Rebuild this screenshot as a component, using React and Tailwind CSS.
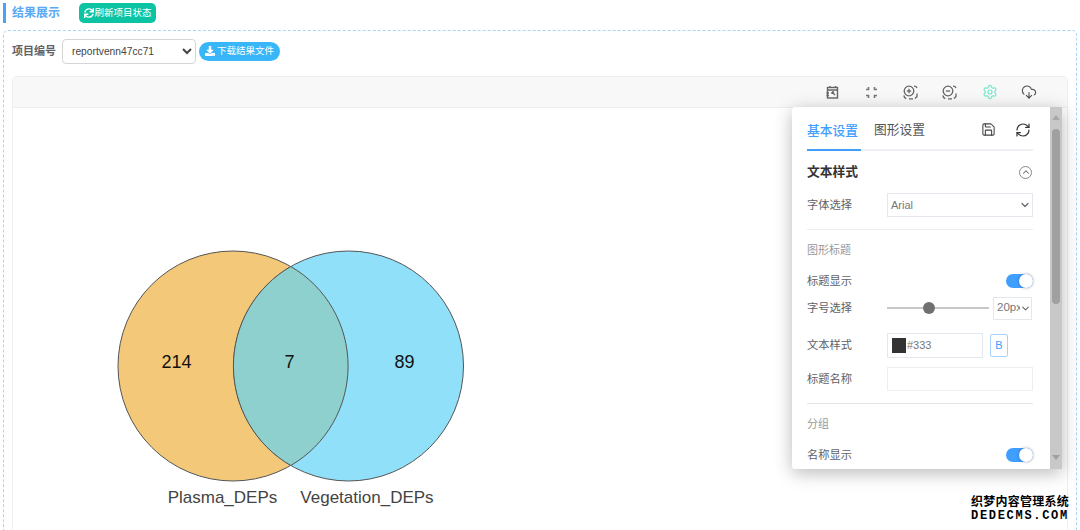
import React from 'react';
import { ChevronDown, ChevronUp, CloudDownload, RefreshCw, Save, Settings } from 'lucide-react';
import { FaDownload, FaSync } from 'react-icons/fa';

const font = { fontFamily: '"Liberation Sans", "Noto Sans CJK SC", sans-serif' };

const RestoreIcon = () => (
  <svg width="13" height="14" viewBox="0 0 13 14" fill="none" stroke="#666" strokeWidth="1.4">
    <rect x="1.5" y="2.5" width="10" height="10.5" />
    <path d="M1.5 5h10M4 1v2M9.5 1v2M0.5 8h2.5M0.5 10.5h2.5" />
    <path d="M6 7l3 3M6 7v2M6 7h2" />
  </svg>
);

const FullIcon = () => (
  <svg width="13" height="13" viewBox="0 0 13 13" fill="none" stroke="#777" strokeWidth="1.6">
    <path d="M1 3.5L3.5 3.5L3.5 1M9.5 1L9.5 3.5L12 3.5M1 9.5L3.5 9.5L3.5 12M9.5 12L9.5 9.5L12 9.5" />
  </svg>
);

const ZoomIcon = ({ plus }) => (
  <svg width="15" height="15" viewBox="0 0 15 15" fill="none" stroke="#666" strokeWidth="1.3">
    <circle cx="6" cy="6" r="4.8" />
    <path d="M3.8 6h4.4" />
    {plus && <path d="M6 3.8v4.4" />}
    <path d="M11 1.2c1.4 0 2.6.6 3 1.8M14 8.5v3l-2 2M10 13.8H6M0.8 10.5c.3 1.5 1 2.6 2.4 3.2" />
  </svg>
);

const Toggle = () => (
  <div className="flex w-[27px] h-[14px] rounded-full bg-[#409eff] items-center justify-end">
    <div className="w-[14px] h-[14px] rounded-full bg-white shadow-[0_0_3px_rgba(0,0,0,0.35)]" />
  </div>
);

const Row = ({ label, className, children }) => (
  <div className={`flex items-center justify-between text-[11.25px] text-[#606266] ${className}`}>
    <span className="w-[80px] shrink-0">{label}</span>
    {children}
  </div>
);

const VennChart = () => (
  <svg width="500" height="420" viewBox="13 108 500 420" className="block">
    <circle cx="233" cy="366" r="115" fill="#f3c879" stroke="#555" strokeWidth="1" />
    <circle cx="348.5" cy="366" r="115" fill="#8fe0f8" stroke="#555" strokeWidth="1" />
    <path
      d="M290.75 266.5A115 115 0 0 1 290.75 465.5A115 115 0 0 1 290.75 266.5Z"
      fill="#8dd0ce"
      stroke="#555"
      strokeWidth="1"
    />
    <g fontFamily="Liberation Sans, sans-serif" fontSize="18" textAnchor="middle" fill="#111">
      <text x="176.5" y="368">214</text>
      <text x="289.5" y="368">7</text>
      <text x="404.5" y="368">89</text>
    </g>
    <g fontFamily="Liberation Sans, sans-serif" fontSize="17" textAnchor="middle" fill="#444">
      <text x="222.5" y="503">Plasma_DEPs</text>
      <text x="367" y="503">Vegetation_DEPs</text>
    </g>
  </svg>
);

const SettingsPopover = () => (
  <div className="absolute left-[779px] top-[30px] w-[270px] h-[362px] flex bg-white rounded-l-[3px] overflow-hidden shadow-[0_4px_18px_rgba(0,0,0,0.28)]">
    <div className="w-[258px] pl-[15px] pr-[17px] shrink-0">
      <div className="flex items-end h-[44px] border-b-2 border-[#eff0f5]">
        <div className="w-[54px] h-[44px] flex items-center text-[12.75px] text-[#409eff] font-medium border-b-2 border-[#409eff] -mb-[2px] pt-[5px]">
          基本设置
        </div>
        <div className="ml-[13px] h-[44px] flex items-center text-[12.75px] text-[#555] pt-[5px]">图形设置</div>
        <div className="ml-auto h-[44px] flex items-center gap-[19px] pr-[2px] pt-[5px]">
          <Save size={15} color="#444" strokeWidth={1.7} />
          <RefreshCw size={16} color="#333" strokeWidth={1.8} />
        </div>
      </div>
      <div className="flex items-center justify-between h-[42px] text-[12.75px] font-bold text-[#333]">
        文本样式
        <div className="w-[13px] h-[13px] rounded-full border border-[#888] flex items-center justify-center mr-px">
          <ChevronUp size={10} color="#666" strokeWidth={2.5} />
        </div>
      </div>
      <Row label="字体选择" className="h-[24px]">
        <div className="flex-1 h-[24px] border border-[#e4e7ed] flex items-center justify-between pl-[3px] pr-[1px] text-[11px] text-[#777]">
          Arial
          <ChevronDown size={12} color="#666" strokeWidth={2.4} />
        </div>
      </Row>
      <div className="h-px bg-[#eeeeee] mt-[12px]" />
      <div className="h-[39px] pt-[2px] flex items-center text-[11px] text-[#999]">图形标题</div>
      <Row label="标题显示" className="h-[24px]">
        <Toggle />
      </Row>
      <Row label="字号选择" className="h-[24px] mt-[3px]">
        <div className="flex-1 flex items-center">
          <div className="w-[36px] h-[2px] bg-[#c8c8c8]" />
          <div className="w-[12px] h-[12px] rounded-full bg-[#707070]" />
          <div className="w-[54px] h-[2px] bg-[#c8c8c8]" />
          <div className="ml-[4px] w-[39px] h-[23px] border border-[#e4e7ed] flex items-center text-[11.5px] text-[#777] pl-[3px]">
            <span className="w-[23px] overflow-hidden shrink-0">20px</span>
            <ChevronDown size={11} color="#666" strokeWidth={2.4} className="shrink-0" />
          </div>
        </div>
      </Row>
      <Row label="文本样式" className="h-[25px] mt-[13px]">
        <div className="flex-1 flex items-center">
          <div className="w-[96px] h-[25px] border border-[#e4e7ed] flex items-center pl-[4px] gap-[1px] text-[11px] text-[#777]">
            <div className="w-[14px] h-[15px] bg-[#333]" />
            #333
          </div>
          <div className="ml-[7px] w-[18px] h-[23px] border border-[#a8d2fb] rounded-[2px] flex items-center justify-center text-[11px] text-[#409eff]">
            B
          </div>
        </div>
      </Row>
      <Row label="标题名称" className="h-[24px] mt-[9px]">
        <div className="flex-1 h-[24px] border border-[#eeeeee]" />
      </Row>
      <div className="h-px bg-[#e4e4e4] mt-[12px]" />
      <div className="h-[39px] pt-[2px] flex items-center text-[11px] text-[#999]">分组</div>
      <Row label="名称显示" className="h-[24px]">
        <Toggle />
      </Row>
    </div>
    <div className="w-[12px] bg-[#c8c8c8] flex flex-col items-center justify-between pt-[8px] pb-[9px] relative">
      <div className="w-0 h-0 border-l-[4px] border-r-[4px] border-b-[5px] border-l-transparent border-r-transparent border-b-[#a8a8a8]" />
      <div className="absolute top-[22px] left-[2px] w-[8px] h-[175px] rounded-full bg-[#a0a0a0]" />
      <div className="w-0 h-0 border-l-[4px] border-r-[4px] border-t-[5px] border-l-transparent border-r-transparent border-t-[#a0a0a0]" />
    </div>
  </div>
);

const App = () => {
  return (
    <div className="relative w-[1080px] h-[530px] overflow-hidden bg-white flex flex-col" style={font}>
      {/* title bar */}
      <div className="h-[30px] shrink-0 flex items-start pt-[3px] pl-[3px]">
        <div className="w-[3px] h-[20px] bg-[#4aa3f5]" />
        <div className="ml-[6px] h-[20px] flex items-center text-[12px] font-bold text-[#5aa9f5]">结果展示</div>
        <button
          type="button"
          className="ml-[19px] w-[77px] h-[20px] rounded-[5px] bg-[#0cc4a4] text-white text-[9.5px] flex items-center justify-center gap-[1px]"
        >
          <FaSync size={10} />
          刷新项目状态
        </button>
      </div>

      {/* result panel */}
      <div className="ml-[3px] w-[1074px] flex-1 border border-dashed border-[#a9d4f8] rounded-t-[5px] border-b-0 pl-[8px] pr-[8px] min-h-0">
        <div className="flex items-center h-[40px]">
          <span className="text-[11px] font-bold text-[#606266] w-[50px]">项目编号</span>
          <select
            defaultValue="reportvenn47cc71"
            className="w-[134px] h-[25px] border border-[#d5d5d5] rounded-[4px] bg-white text-[10.25px] text-[#444] pl-[5px]"
          >
            <option>reportvenn47cc71</option>
          </select>
          <button
            type="button"
            className="ml-[3px] w-[81px] h-[19px] rounded-full bg-[#38b6f8] text-white text-[9.5px] flex items-center justify-center gap-[2px]"
          >
            <FaDownload size={10} />
            下载结果文件
          </button>
        </div>

        <div className="relative mt-[5px] h-[470px] border border-[#eeeeee] rounded-t-[5px]">
          <div className="h-[31px] bg-[#f8f8f8] border-b border-[#eeeeee] flex items-center rounded-t-[5px] pl-[799px]">
            <div className="w-[40px] flex justify-center"><RestoreIcon /></div>
            <div className="w-[39px] flex justify-center"><FullIcon /></div>
            <div className="w-[39px] flex justify-center"><ZoomIcon plus /></div>
            <div className="w-[39px] flex justify-center"><ZoomIcon /></div>
            <div className="w-[41px] flex justify-center"><Settings size={16} color="#74e6cc" strokeWidth={1.7} /></div>
            <div className="w-[38px] flex justify-center"><CloudDownload size={16} color="#555" strokeWidth={1.7} /></div>
          </div>
          <VennChart />
          <SettingsPopover />
        </div>
      </div>

      {/* site watermark */}
      <div className="absolute left-[971px] top-[495px] w-[99px] text-black font-bold [text-shadow:0_0_2px_#fff]">
        <div className="text-[12px] leading-[14px] tracking-[0.25px] whitespace-nowrap">织梦内容管理系统</div>
        <div
          className="text-[12px] leading-[14px] tracking-[1.7px] whitespace-nowrap"
          style={{ fontFamily: '"Liberation Mono", monospace' }}
        >
          DEDECMS.COM
        </div>
      </div>
    </div>
  );
};

export default App;
